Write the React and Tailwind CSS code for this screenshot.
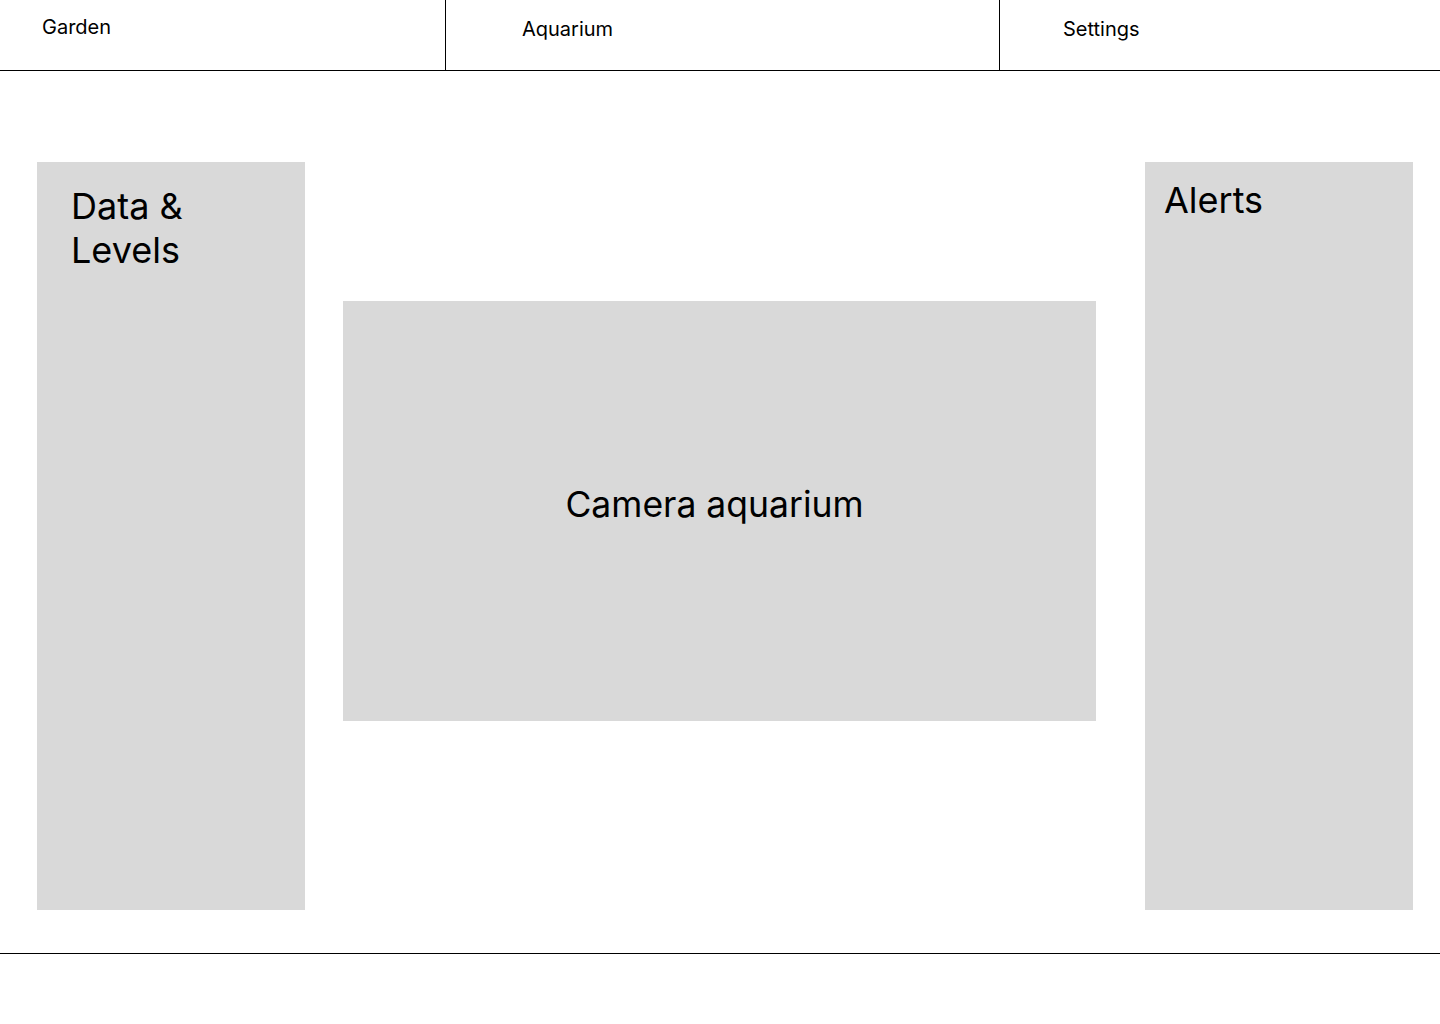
export default function App() {
  return (
    <div className="w-[1440px] h-[1024px] bg-white text-black" style={{ fontFamily: 'Inter, "Noto Sans", sans-serif' }}>
      <header className="flex h-[71px] border-b border-black">
        <div className="w-[446px] border-r border-black pl-[42px] pt-[15px] text-[20px] leading-[24px]">Garden</div>
        <div className="w-[554px] border-r border-black pl-[76px] pt-[17px] text-[20px] leading-[24px]">Aquarium</div>
        <div className="flex-1 pl-[63px] pt-[17px] text-[20px] leading-[24px]">Settings</div>
      </header>
      <main className="flex pl-[37px] pt-[91px] h-[883px] border-b border-black">
        <section className="w-[268px] h-[748px] bg-[#d9d9d9] pl-[34px] pt-[22px] text-[36px] leading-[44px]">
          Data &amp;<br />Levels
        </section>
        <section className="ml-[38px] mt-[139px] w-[753px] h-[420px] bg-[#d9d9d9] flex items-center justify-center pb-[12px] pr-[10px] text-[35.5px] leading-[44px]">
          Camera aquarium
        </section>
        <section className="ml-[49px] w-[268px] h-[748px] bg-[#d9d9d9] pl-[19px] pt-[16px] text-[36px] leading-[44px]">
          Alerts
        </section>
      </main>
    </div>
  );
}
